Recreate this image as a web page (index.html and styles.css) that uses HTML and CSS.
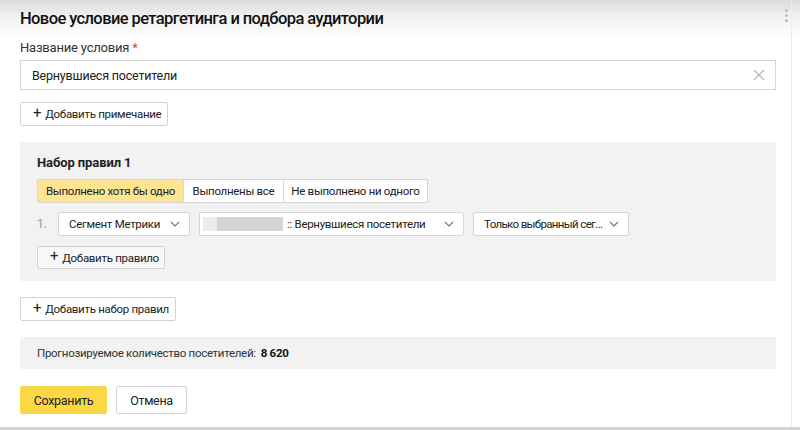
FILE: index.html
```html
<!DOCTYPE html>
<html lang="ru">
<head>
<meta charset="utf-8">
<link rel="stylesheet" href="styles.css">
</head>
<body>
<div class="window">
  <div class="dialog">
    <h1 class="title">Новое условие ретаргетинга и подбора аудитории</h1>
    <label class="field-label">Название условия <span class="req">*</span></label>
    <div class="input">
      <span class="input-text">Вернувшиеся посетители</span>
      <svg class="clear" width="12" height="12" viewBox="0 0 12 12"><path d="M1 1L11 11M11 1L1 11" stroke="#b5b5b5" stroke-width="1.2" fill="none"/></svg>
    </div>
    <button class="btn btn-add note-btn"><span class="plus">+</span><span>Добавить примечание</span></button>

    <div class="ruleset">
      <div class="ruleset-title">Набор правил 1</div>
      <div class="tabs">
        <span class="tab tab-1 active">Выполнено хотя бы одно</span>
        <span class="tab tab-2">Выполнены все</span>
        <span class="tab tab-3">Не выполнено ни одного</span>
      </div>
      <div class="rule-row">
        <span class="num">1.</span>
        <div class="select sel-1"><span>Сегмент Метрики</span><svg class="chev" width="10" height="6" viewBox="0 0 10 6"><path d="M1 1L5 5L9 1" stroke="#777" stroke-width="1.2" fill="none"/></svg></div>
        <div class="select sel-2"><span class="blur"><span class="blur-a"></span><span class="blur-b"></span></span><span class="sel-text">:: Вернувшиеся посетители</span><svg class="chev" width="10" height="6" viewBox="0 0 10 6"><path d="M1 1L5 5L9 1" stroke="#777" stroke-width="1.2" fill="none"/></svg></div>
        <div class="select sel-3"><span>Только выбранный сег...</span><svg class="chev" width="10" height="6" viewBox="0 0 10 6"><path d="M1 1L5 5L9 1" stroke="#777" stroke-width="1.2" fill="none"/></svg></div>
      </div>
      <button class="btn btn-add rule-btn"><span class="plus">+</span><span>Добавить правило</span></button>
    </div>

    <button class="btn btn-add set-btn"><span class="plus">+</span><span>Добавить набор правил</span></button>

    <div class="forecast">Прогнозируемое количество посетителей: <b>8 620</b></div>

    <div class="actions">
      <button class="btn btn-save">Сохранить</button>
      <button class="btn btn-cancel">Отмена</button>
    </div>
  </div>
  <div class="scroll">
    <span class="dot"></span><span class="dot"></span><span class="dot"></span>
  </div>
</div>
<div class="bottom-bar"></div>
</body>
</html>
```

FILE: styles.css
```css
* { box-sizing: border-box; }
html, body { margin: 0; padding: 0; }
body {
  width: 800px;
  height: 430px;
  overflow: hidden;
  font-family: Roboto, "Liberation Sans", Arial, sans-serif;
  color: #222;
  background: #fff;
  display: flex;
  flex-direction: column;
  white-space: nowrap;
}
.window {
  flex: 1;
  display: flex;
  background: linear-gradient(#dcdcdc 0px, #f3f3f3 18px, #fff 38px);
}
.dialog {
  width: 776px;
  padding: 8px 0 0 20px;
  display: flex;
  flex-direction: column;
  align-items: flex-start;
}
.title {
  margin: 0;
  font-size: 16.5px;
  font-weight: 500;
  color: #111;
  line-height: 22px;
  letter-spacing: -0.6px;
}
.field-label {
  margin-top: 10px;
  font-size: 13px;
  color: #333;
  line-height: 16px;
  letter-spacing: -0.2px;
}
.req { color: #e0463e; }
.input {
  margin-top: 4px;
  width: 756px;
  height: 30px;
  border: 1px solid #d6d6d6;
  display: flex;
  align-items: center;
  justify-content: space-between;
  padding: 0 10px 0 11px;
  background: #fff;
}
.input-text { font-size: 12.5px; color: #222; letter-spacing: -0.2px; }
.clear { display: block; }
.btn {
  font-family: inherit;
  border: 1px solid #d3d3d3;
  background: #fff;
  color: #222;
  border-radius: 2px;
  padding: 0 10px;
  font-size: 11.5px;
  letter-spacing: -0.3px;
  cursor: pointer;
}
.btn-add { height: 24px; display: flex; align-items: center; gap: 4px; padding: 0 9px 0 12px; }
.plus { font-size: 15px; line-height: 1; margin-top: -2px; }
.note-btn { margin-top: 12px; width: 148px; }
.ruleset {
  margin-top: 16px;
  width: 756px;
  background: #f2f2f2;
  padding: 13px 17px 12px 17px;
  display: flex;
  flex-direction: column;
  align-items: flex-start;
}
.ruleset-title {
  font-weight: bold;
  font-size: 13px;
  line-height: 16px;
  letter-spacing: -0.1px;
}
.tabs {
  margin-top: 8px;
  display: flex;
  border: 1px solid #d3d3d3;
  border-radius: 2px;
  background: #fff;
  height: 24px;
}
.tab {
  font-size: 11.5px;
  letter-spacing: -0.3px;
  display: flex;
  align-items: center;
  justify-content: center;
  color: #222;
  border-left: 1px solid #d8d8d8;
}
.tab-1 { width: 146px; }
.tab-2 { width: 99px; }
.tab-3 { width: 144px; }
.tab:first-child { border-left: none; }
.tab.active { background: #fde593; border-right: 1px solid #efd880; }
.tab.active + .tab { border-left: none; }
.rule-row {
  margin-top: 9px;
  display: flex;
  align-items: center;
  gap: 9px;
}
.num { width: 12px; color: #999; font-size: 12px; }
.select {
  height: 24px;
  border: 1px solid #d6d6d6;
  border-radius: 2px;
  background: #fff;
  display: flex;
  align-items: center;
  justify-content: space-between;
  padding: 0 9px 0 10px;
  font-size: 11.5px;
  letter-spacing: -0.3px;
  color: #222;
}
.sel-1 { width: 132px; }
.sel-2 { width: 265px; padding-left: 3px; }
.sel-2 .sel-text { flex: 1; margin-left: 4px; }
.sel-3 { width: 156px; letter-spacing: -0.65px; }
.blur { display: flex; height: 14px; }
.blur-a { width: 14px; background: #ececec; }
.blur-b { width: 66px; background: #d6d6d6; }
.chev { display: block; flex: none; }
.rule-btn { margin-top: 10px; height: 23px; width: 128px; background: #f7f7f7; }
.set-btn { margin-top: 16px; width: 156px; }
.forecast {
  margin-top: 16px;
  width: 756px;
  height: 32px;
  background: #f2f2f2;
  display: flex;
  align-items: center;
  padding-left: 17px;
  font-size: 11.5px;
  letter-spacing: -0.3px;
  color: #333;
  gap: 5px;
}
.forecast b { color: #111; }
.actions {
  margin-top: 17px;
  display: flex;
  gap: 9px;
}
.btn-save {
  height: 28px;
  width: 87px;
  background: #fcd746;
  border-color: #fcd746;
  font-size: 12.5px;
}
.btn-cancel {
  height: 28px;
  width: 71px;
  font-size: 12.5px;
}
.scroll {
  flex: 1;
  border-right: 1px solid #ececec;
  margin-right: 8px;
  display: flex;
  flex-direction: column;
  align-items: flex-end;
  padding: 9px 3px 0 0;
  gap: 2px;
}
.dot { width: 3px; height: 3px; border-radius: 50%; background: #bbb; }
.bottom-bar { height: 3px; background: #d4d4d4; }
```
